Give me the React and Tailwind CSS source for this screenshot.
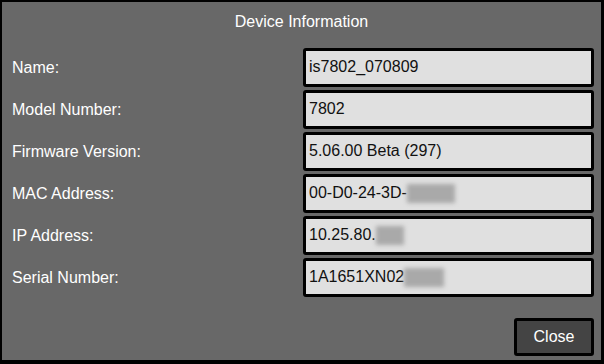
import React from 'react';

const fields = [
  { label: 'Name:', value: 'is7802_070809' },
  { label: 'Model Number:', value: '7802' },
  { label: 'Firmware Version:', value: '5.06.00 Beta (297)' },
  { label: 'MAC Address:', value: '00-D0-24-3D-', hidden: 'w-[48px]' },
  { label: 'IP Address:', value: '10.25.80.', hidden: 'w-[28px]' },
  { label: 'Serial Number:', value: '1A1651XN02', hidden: 'w-[40px]' },
];

const Redacted = ({ width }) => (
  <span className={`inline-block h-[19px] ${width} bg-[#a9a9a9] blur-[2px] align-middle`} />
);

const App = () => {
  return (
    <div
      className="w-[604px] h-[364px] bg-[#686868] border-l-2 border-t-2 border-r-[3px] border-b-[4px] border-black flex flex-col text-[16px]"
      style={{ fontFamily: '"Liberation Sans", Arial, sans-serif' }}
    >
      {/* Title */}
      <div className="h-[38px] flex items-center justify-center text-white pt-[2px]">
        Device Information
      </div>

      {/* Fields */}
      <div className="flex flex-col pt-[6px] pr-[7px]">
        {fields.map(({ label, value, hidden }) => (
          <div key={label} className="flex items-center h-[42px]">
            <div className="w-[301px] pl-[10px] text-white pt-[1px]">{label}</div>
            <div className="flex-1 h-[39px] flex items-center bg-[#e0e0e0] border-[3px] border-black rounded-[3px] pl-[3px] text-[#111]">
              <span>{value}</span>
              {hidden && <Redacted width={hidden} />}
            </div>
          </div>
        ))}
      </div>

      {/* Footer */}
      <div className="flex justify-end pr-[7px] pt-[20px]">
        <button className="w-[80px] h-[38px] bg-[#444] border-[3px] border-black rounded-[3px] text-white text-[16px]">
          Close
        </button>
      </div>
    </div>
  );
};

export default App;
